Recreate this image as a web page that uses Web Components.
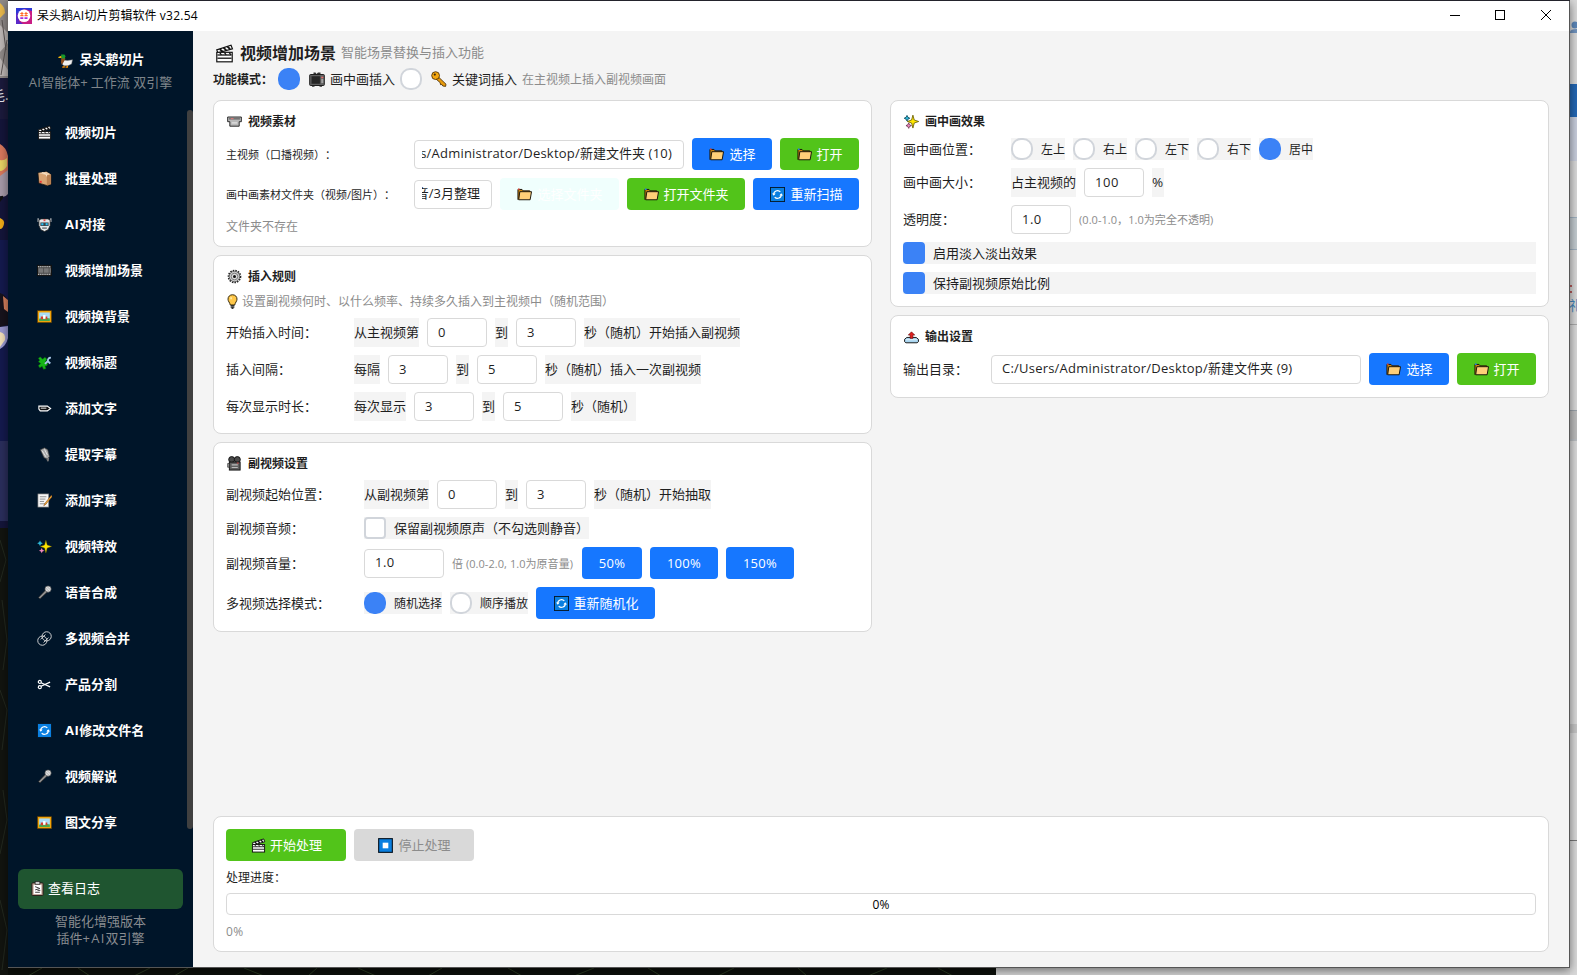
<!DOCTYPE html>
<html lang="zh-CN">
<head>
<meta charset="utf-8">
<title>呆头鹅AI切片剪辑软件 v32.54</title>
<style>
html,body{margin:0;padding:0}
body{width:1577px;height:975px;overflow:hidden;font:13px/17px "Open Sans","Noto Sans CJK SC",sans-serif;color:#1f1f1f;text-spacing-trim:space-all}
</style>
</head>
<body>
<desk-top><app-window></app-window></desk-top>
<script>
const ICONS={
clapper:'<path d="M1.5 5 13.5 1l1.2 3L2.5 7.5z" fill="#fff" stroke="#111"/><path d="M4 4.3l2.3 2M7.2 3.2l2.3 2M10.4 2.2l2.3 2" stroke="#111" stroke-width="1.5"/><rect x="1.5" y="7" width="13" height="8" fill="#fff" stroke="#111"/><path d="M2 9.3h12M2 12h12" stroke="#333" stroke-width="1.2"/><path d="M4 7.2l1.4 2M8 7.2l1.4 2M12 7.2l1.4 2" stroke="#111"/>',
box:'<path d="M1 2 10 .8l5 3V14l-4 1.6L2 13z" fill="#d9a574" stroke="#1a120c" stroke-width=".8"/><path d="M1 2 10.5 4.5 15 3.8 10 .8z" fill="#eccba6"/><path d="M10.5 4.5V15.5L15 14V3.8z" fill="#b98152"/><path d="M5.5 1.5l4.7 2.2v2" stroke="#f6e3ca" fill="none"/><path d="M3 10.5h2v2H3z" fill="#e33"/>',
robot:'<path d="M1.2 1.2v4M14.8 1.2v4" stroke="#ccc" stroke-width="1.2"/><path d="M2 3.5l2.2-1.5h7.6L14 3.500v5.500l-2 4.500-4 2-4-2L2 9z" fill="#e4e7e9" stroke="#222" stroke-width=".8"/><path d="M3.600 5.800h8.800v3.800H3.600z" fill="#3c4246"/><rect x="4.600" y="6.600" width="2.200" height="2.200" fill="#29c0f6"/><rect x="9.200" y="6.600" width="2.200" height="2.200" fill="#29c0f6"/><path d="M7 2.5h2v2H7z" fill="#e44"/><path d="M5.500 11.800h5" stroke="#333"/>',
film:'<rect x=".5" y="2.500" width="15" height="11" fill="#4a4a4a" stroke="#111"/><path d="M1 3.900h14M1 12.100h14" stroke="#ccc" stroke-width="1.2" stroke-dasharray="1 1"/><path d="M1.500 5.500h5.200v5H1.500zM7.500 5.500h5v5h-5zM13.300 5.500h1.500v5h-1.500z" fill="#777"/>',
picture:'<rect x=".5" y="1.800" width="15" height="12.700" fill="#f0a30a" stroke="#5c3a00" stroke-width=".7"/><rect x="2.300" y="3.700" width="11.400" height="9" fill="#a9dcf7"/><path d="M2.300 10.300 7 9l6.700 1v2.700H2.300z" fill="#4aa84a"/><path d="M4 8h3v3H4zM9 8h2v3H9z" fill="#d83b2e"/><path d="M6.500 6.500h2.500v4H6.500z" fill="#fff"/>',
puzzle:'<path d="M3 5.500 1.500 3.500 3.500 2 6 4.500 8.500 2.500l2 2L8.700 7.500 11.500 9l-1 2.500-2 .2 1 2.800-2.500.8L5.500 12 3 13.500 1.500 11.500 4 9 1.500 7.200z" fill="#16b516" stroke="#0d7a0d" stroke-width=".5"/><path d="M14.800 3a2.800 2.800 0 0 0-3 3.800l2.400 2.200M12 6 8.500 9.500" stroke="#a8c8e8" stroke-width="2" fill="none"/>',
pencil:'<path d="M2 5.500h9l3.500 2.500L11 10.500H3.500L2 8.500z" fill="#111" stroke="#fff" stroke-width="1.200"/><path d="M4 7.600h6" stroke="#fff" stroke-width="1"/>',
studio:'<path d="M3.500 3 8 .8l3.500 2.200 1.800 7-2 3-3.800-1.500z" fill="#a8a8a8" stroke="#333" stroke-width=".7"/><path d="M5.500 4 9.500 10.500M8 2.500l3 6" stroke="#e6e6e6"/><path d="M10 12.700l3-1.500-.5 4-1.500.2z" fill="#777"/>',
memo:'<rect x="1" y="1" width="11.5" height="14" fill="#f6f6f6" stroke="#777" stroke-width=".7"/><path d="M3 4h7M3 6.5h6M3 9h4.5M3 11.5h7" stroke="#8b8b8b"/><path d="M15.3 2.5 8.2 11.4l-1 2.2L9.4 12 16 4z" fill="#ffb93c" stroke="#8c4a14" stroke-width=".6"/>',
sparkles:'<path d="M9.5 1.2l1.400 5.200 4.800 1.600-4.800 1.600-1.400 5.400-1.400-5.400L3.500 8l4.600-1.600z" fill="#ffe600" stroke="#6b5f00" stroke-width="var(--edge,.4)"/><path d="M3.200 1.500l1 2 2 1-2 1-1 2-1-2-2-1 2-1z" fill="#2fb7d8" stroke="#0b4a5c" stroke-width="var(--edge,.1)"/><path d="M5 9.500l.9 2 2 .9-2 .9-.9 2-.9-2-2-.9 2-.9z" fill="#f28bc0" stroke="#6b3450" stroke-width="var(--edge,.1)"/>',
mic:'<path d="M9 5.5 11 7.5 3.200 14.800 1.500 13.300z" fill="#8d8d8d" stroke="#222" stroke-width=".7"/><circle cx="11.800" cy="4.300" r="3.300" fill="#ddd" stroke="#555" stroke-width=".7"/><path d="M9.500 3.500l3.500 3.200M10.800 1.800l3.300 3" stroke="#999" stroke-width=".6"/>',
link:'<g fill="none" stroke="#d8d8d8" stroke-width="1"><circle cx="5.700" cy="10.300" r="4.900"/><circle cx="10.300" cy="5.700" r="4.900"/><path d="M3.800 8.800 9 3.800M12.200 7.200 7 12.200"/></g>',
scissors:'<g fill="none" stroke="#fff" stroke-width="1.300"><circle cx="3" cy="5.200" r="1.600"/><circle cx="3" cy="10.800" r="1.600"/><path d="M4.300 6.200 14 10.500M4.300 9.800 14 5.500"/></g>',
refresh:'<rect x=".5" y=".5" width="15" height="15" fill="#0a7fe0" stroke="#061a2b"/><path d="M4 8.300A4 4 0 0 1 11 5.300M12 7.700A4 4 0 0 1 5 10.700" fill="none" stroke="#fff" stroke-width="1.300"/><path d="M2.200 7h3.800L4 9.400zM10 9h3.900L12 6.600z" fill="#fff"/>',
clip:'<rect x="2" y="2" width="12" height="13.500" rx="1" fill="#b99a8b" stroke="#241a16"/><rect x="3.800" y="4" width="8.400" height="10" fill="#fff"/><path d="M5.500 6 10.500 8 5.500 9.500M5.500 12h5M8 10l3 0" stroke="#333" fill="none"/><rect x="5.500" y=".7" width="5" height="2.800" fill="#ccc" stroke="#222" stroke-width=".7"/>',
tv:'<path d="M4.500 1.500h2l1 1.500 1.500-1.500h2.500V4h-7z" fill="#333"/><rect x=".7" y="3.500" width="14.600" height="11" rx=".8" fill="#666" stroke="#1e1e1e"/><rect x="2.200" y="5" width="9" height="8" fill="#262626" stroke="#555" stroke-width=".6"/><path d="M12.300 6.500h2" stroke="#e66" stroke-width="1.400"/><path d="M12.300 9h2M12.300 11h2" stroke="#ddd"/><path d="M3 15.200h2.500M10.500 15.200H13" stroke="#222"/>',
key:'<path d="M7.500 6 15 13.200l-.4 2.200-2.800-.4-1-1.500-1.300.2-.3-2L5 8z" fill="#e79a0c" stroke="#402600" stroke-width=".8"/><circle cx="4.600" cy="4.600" r="3.900" fill="#f5a70e" stroke="#402600" stroke-width=".8"/><circle cx="3.800" cy="3.600" r="1.100" fill="#3b2a10"/>',
vhs:'<path d="M.7 3.200h14.600v5H13V13H3V8.200H.7z" fill="#b9b9b9" stroke="#222"/><path d="M2.200 5.200h11.600" stroke="#555" stroke-width="1.200"/><path d="M5 9.500h6" stroke="#eee"/><path d="M4 5h3" stroke="#e77"/>',
folder:'<path d="M1 13.600V2.600h4.300l1.300 1.500h7v2" fill="#c98310" stroke="#141008" stroke-width="1"/><path d="M1.800 13.600 3 5h12.500l-1.500 8.600z" fill="#ffcf78" stroke="#141008"/><path d="M1 2.400h1.800" stroke="var(--tab,#d4402e)" stroke-width="1.600"/>',
gear:'<circle cx="8" cy="8" r="6.400" fill="none" stroke="#222" stroke-width="1.800" stroke-dasharray="1.600 1.150"/><circle cx="8" cy="8" r="5.600" fill="#c8c8c8" stroke="#444" stroke-width=".8"/><circle cx="8" cy="8" r="3.500" fill="#ddd" stroke="#777" stroke-width="1"/><circle cx="8" cy="8" r="1.600" fill="#111"/>',
bulb:'<path d="M8 .8c3 0 4.800 2.100 4.800 4.700 0 2.400-2 3.600-2.400 6.200H5.600C5.200 9.100 3.200 7.900 3.200 5.500 3.200 2.900 5 .8 8 .8z" fill="#ffc84a" stroke="#2c2004"/><path d="M6 12.500h4M6 14h4M7 15.400h2" stroke="#333" stroke-width="1.300"/><path d="M6.500 3.500v2" stroke="#fff3c0" stroke-width="1.400"/>',
camera:'<circle cx="5" cy="3.800" r="3.200" fill="#4a4a4a" stroke="#111"/><circle cx="11" cy="3.800" r="3.200" fill="#4a4a4a" stroke="#111"/><rect x="2.500" y="6.500" width="11.500" height="8.500" fill="#606060" stroke="#111"/><path d="M.7 8h2v4h-2z" fill="#999" stroke="#111" stroke-width=".6"/><path d="M5 9.500h6.500M5 12.300h6.500" stroke="#bbb" stroke-width="1.200"/><path d="M10.500 7.500h2" stroke="#d44"/>',
outbox:'<path d="M3 9h10l2.400 2v2.500l-1.400 1.200H2L.6 13.500V11z" fill="#a7d4ef" stroke="#111"/><path d="M2 11.500h12" stroke="#e8f6ff"/><path d="M8 3 11.500 6.500H9.500v3.500H6.500V6.500H4.500z" fill="#e02020" stroke="#5b0909" stroke-width=".6"/>',
stop:'<rect x=".7" y=".7" width="14.600" height="14.600" fill="#0a7fe0" stroke="#07131f" stroke-width="1.200"/><rect x="5" y="5" width="6" height="6" fill="#fff"/>',
duck:'<path d="M6 7.500 10 8l5.500-.8-1 4.500-4 2H6.500L4.500 12z" fill="#efefef" stroke="#666" stroke-width=".5"/><path d="M3.500 4.500 7 3l.8 3.500L6 9.500l-2 3L3.200 10z" fill="#8a4a1c"/><path d="M3.300 1.500h3.500l1.300 2-1 2.300H3.800z" fill="#169a2c"/><path d="M.3 4.200 3.500 3v2.200H.5z" fill="#f5b60a"/><path d="M6.500 13.500V15H4.500M10 13.500V15H8" stroke="#f08a00" stroke-width="1.400" fill="none"/>',
logo:'<rect width="16" height="16" fill="#c81d84"/><path d="M0 0h8v3L3 8v5l4 3H0z" fill="#5a28c8"/><path d="M0 0h16v3L8 1 0 6z" fill="#2d37d6"/><circle cx="8" cy="7.800" r="6.300" fill="#fff"/><path d="M4.300 5.500h3.200M8.500 5.500h3.200M4.300 7.600h3.200M8.500 7.600h3.200M6 4v4M10 4v4" stroke="#ff6a28" stroke-width="1.100"/><path d="M4.300 10.200h3M8.500 10.200h3" stroke="#a02ce0" stroke-width="1.700"/>'
};
const define=(name,html,after)=>{
  const t=document.createElement('template');t.innerHTML=html;
  customElements.define(name,class extends HTMLElement{
    constructor(){super();this.attachShadow({mode:'open'}).append(t.content.cloneNode(true));}
    connectedCallback(){if(after)after(this,this.shadowRoot);}
  });
};

define('app-icon',`<style>:host{display:block;width:15px;height:15px;flex:none}svg{display:block;width:100%;height:100%}</style><svg viewBox="0 0 16 16"></svg>`,
 (h,r)=>{r.querySelector('svg').innerHTML=ICONS[h.getAttribute('name')]||'';});

/* Latin run with slightly wider tracking */
define('l-run',`<style>:host{display:inline;letter-spacing:var(--track,.22px)}</style><slot></slot>`);

define('ui-text',`<style>:host{display:flex;align-items:center;white-space:nowrap;flex:none}
 :host([tag]){background:#f4f4f4;height:29px}
 :host([label]){width:var(--label,120px)}
 :host([s11]){font-size:11px}:host([s12]){font-size:12px}:host([b]){font-weight:700}
 :host([mute]){color:#8c8c8c}</style><span><slot></slot></span>`);

define('ui-input',`<style>:host{display:flex;box-sizing:border-box;height:29px;border:1px solid #d9d9d9;border-radius:4px;background:#fff;padding:0 10px 2px;align-items:center;flex:none;overflow:hidden;white-space:nowrap}
 :host([end]){padding:0 11px 2px 7px}
 :host([num]){letter-spacing:.5px}
 div{flex:1;overflow:hidden;display:flex;line-height:20px}:host([end]) div{justify-content:flex-end}</style><div><span><slot></slot></span></div>`);

define('ui-button',`<style>:host{display:flex;height:32px;border-radius:4px;background:#1677ff;color:#fff;align-items:center;justify-content:center;gap:6px;white-space:nowrap;flex:none}
 :host([kind=green]){background:#52c41a;gap:5px}:host([kind=ghost]){background:#f0fffd}:host([kind=off]){background:#d9d9d9;color:#8c8c8c}
 :host([num]){letter-spacing:.3px}
 div{margin:0 -1px 0 1px}</style><div hidden></div><span><slot></slot></span>`,
 (h,r)=>{const n=h.getAttribute('icon'),d=r.querySelector('div');if(!d)return;if(n){d.hidden=false;d.innerHTML='<app-icon name="'+n+'"></app-icon>';}else d.remove();});

define('ui-choice',`<style>:host{display:flex;align-items:center;height:22px;gap:8px;background:#f4f4f4;white-space:nowrap;flex:none}
 i{box-sizing:border-box;width:22px;height:22px;border:2px solid #d1d5db;background:#fff;border-radius:10px;flex:none}
 :host([box]) i{border-radius:4px}:host([on]) i{background:#3b82f6;border-color:#3b82f6}
 :host([s12]){font-size:12px}
 app-icon{width:16px;height:16px;margin:0 -3px 0 1px}</style><i></i><div></div><span><slot></slot></span>`,
 (h,r)=>{const d=r.querySelector('div');if(!d)return;const n=h.getAttribute('icon');if(n)d.innerHTML='<app-icon name="'+n+'"></app-icon>';else d.remove();});

define('ui-row',`<style>:host{display:flex;align-items:center;gap:8px;height:29px}:host([h32]){height:32px}:host([h22]){height:22px}:host([h17]){height:17px}:host([h16]){height:16px}</style><slot></slot>`);

define('ui-card',`<style>:host{box-sizing:border-box;display:flex;flex-direction:column;gap:8px;padding:12px;border:1px solid #d9d9d9;border-radius:8px;background:#fff}
 header{display:flex;align-items:center;gap:6px;height:17px;font-weight:700;font-size:12px;padding-left:1px;--edge:.9}</style><header></header><slot></slot>`,
 (h,r)=>{const e=r.querySelector('header');if(!e)return;if(h.getAttribute('icon'))e.innerHTML='<app-icon name="'+h.getAttribute('icon')+'"></app-icon><span></span>',e.lastChild.textContent=h.getAttribute('heading');else e.remove();});

define('nav-item',`<style>:host{display:flex;align-items:center;height:46px;padding-left:29px;gap:13px;color:#fff;font-weight:700;white-space:nowrap}</style><div></div><span><slot></slot></span>`,
 (h,r)=>{r.querySelector('div').innerHTML='<app-icon name="'+h.getAttribute('icon')+'"></app-icon>';});

define('side-bar',`<style>:host{display:flex;flex-direction:column;width:185px;background:#001529;color:#8a8a8a}
 .brand{display:flex;justify-content:center;align-items:center;gap:6px;height:18px;margin-top:20px;color:#fff;font-weight:700;white-space:nowrap;padding-left:2px}
 .brand span{margin-top:-1px}
 .sub{height:20px;line-height:20px;margin-top:3px;text-align:center;white-space:nowrap;color:#7f858b;--track:1.300px}
 .list{display:flex;margin-top:18px;height:720px;overflow:hidden}
 nav{flex:1;margin-top:-1px;--track:.5px}.bar{width:6px;height:719px;border-radius:3px;background:#404040}
 .log{display:flex;align-items:center;gap:3px;box-sizing:border-box;margin:39px 10px 0;height:40px;border-radius:6px;background:#1f5530;color:#fff;padding:0 0 2px 12px}
 .foot{margin-top:4px;text-align:center;line-height:17px;color:#898c90;--track:1.300px}
 </style>
 <div class="brand"><app-icon name="duck"></app-icon><span>呆头鹅切片</span></div>
 <div class="sub"><l-run style="--track:.3px">AI</l-run>智能体<l-run style="--track:3px">+</l-run>工作流 双引擎</div>
 <div class="list"><nav></nav><div class="bar"></div></div>
 <div class="log"><app-icon name="clip"></app-icon><span>查看日志</span></div>
 <div class="foot">智能化增强版本<br>插件<l-run>+AI</l-run>双引擎</div>`,
 (h,r)=>{r.querySelector('nav').innerHTML=[['clapper','视频切片'],['box','批量处理'],['robot','<l-run>AI</l-run>对接'],['film','视频增加场景'],['picture','视频换背景'],['puzzle','视频标题'],['pencil','添加文字'],['studio','提取字幕'],['memo','添加字幕'],['sparkles','视频特效'],['mic','语音合成'],['link','多视频合并'],['scissors','产品分割'],['refresh','<l-run>AI</l-run>修改文件名'],['mic','视频解说'],['picture','图文分享']].map(a=>`<nav-item icon="${a[0]}">${a[1]}</nav-item>`).join('');});

define('title-bar',`<style>:host{display:flex;align-items:center;height:30px;background:#fff;color:#000;font-size:12px;padding-left:8px;--track:.25px}
 app-icon{width:16px;height:16px;margin-top:-1px}span{margin:-2px 0 0 5px;flex:1;white-space:nowrap}
 svg{display:block;margin:-2px 17px 0 0}</style>
 <app-icon name="logo"></app-icon><span>呆头鹅<l-run>AI</l-run>切片剪辑软件<l-run> v32.54</l-run></span>
 <svg width="102" height="12" fill="none" stroke="#000" shape-rendering="crispEdges"><path d="M0 6.500h10"/><rect x="45.500" y="1.500" width="9" height="9"/><path d="M91 1l10 10M101 1 91 11" shape-rendering="auto"/></svg>`);

define('main-panel',`<style>:host{display:flex;flex-direction:column;flex:1;background:#f4f4f4;padding:11px 20px 15px;box-sizing:border-box}
 .head{display:flex;align-items:center;height:22px;white-space:nowrap}
 .head app-icon{width:19px;height:19px;margin:0 6px 0 2px}
 h1{margin:-1px 0 0;font-size:16px;font-weight:700;line-height:22px}
 .head ui-text{margin:-1px 0 0 5px}
 .mode{display:flex;align-items:center;height:22px;margin-top:4px}
 .mode ui-choice{margin-right:5px}.mode ui-text[b]{width:65px}
 .cols{display:grid;grid-template-columns:659px 659px;gap:18px;margin-top:10px;align-items:start}
 .col{display:flex;flex-direction:column;gap:8px}
 .c1{--label:180px}.c2{--label:120px}.c3{--label:130px}.c4{--label:100px}.c5{--label:80px}
 .bottom{margin-top:auto}
 .prog{box-sizing:border-box;height:22px;border:1px solid #d9d9d9;border-radius:4px;display:flex;align-items:center;justify-content:center;color:#000;font-size:12px}
 </style>
 <div class="head"><app-icon name="clapper"></app-icon><h1>视频增加场景</h1><ui-text mute>智能场景替换与插入功能</ui-text></div>
 <div class="mode"><ui-text b s12>功能模式：</ui-text><ui-choice on icon="tv">画中画插入</ui-choice><ui-choice icon="key">关键词插入</ui-choice><ui-text s12 mute>在主视频上插入副视频画面</ui-text></div>
 <div class="cols"><div class="col">
  <ui-card class="c1" icon="vhs" heading="视频素材">
   <ui-row h32><ui-text label s11>主视频（口播视频）：</ui-text><ui-input end style="width:270px"><l-run>s/Administrator/Desktop/</l-run>新建文件夹<l-run> (10)</l-run></ui-input><ui-button icon="folder" style="width:80px">选择</ui-button><ui-button kind="green" icon="folder" style="width:79px;--tab:#2a7de1">打开</ui-button></ui-row>
   <ui-row h32><ui-text label s11>画中画素材文件夹（视频/图片）：</ui-text><ui-input end style="width:78px">音/3月整理</ui-input><ui-button kind="ghost" icon="folder" style="width:119px">选择文件夹</ui-button><ui-button kind="green" icon="folder" style="width:118px;--tab:#2a7de1">打开文件夹</ui-button><ui-button icon="refresh" style="width:106px">重新扫描</ui-button></ui-row>
   <ui-row h16><ui-text s12 mute>文件夹不存在</ui-text></ui-row>
  </ui-card>
  <ui-card class="c2" icon="gear" heading="插入规则">
   <ui-row h17 style="gap:4px"><app-icon name="bulb" style="margin-right:-2px;margin-left:-1px"></app-icon><ui-text s12 mute>设置副视频何时、以什么频率、持续多久插入到主视频中（随机范围）</ui-text></ui-row>
   <ui-row><ui-text label>开始插入时间：</ui-text><ui-text tag>从主视频第</ui-text><ui-input num style="width:60px">0</ui-input><ui-text tag>到</ui-text><ui-input num style="width:60px">3</ui-input><ui-text tag>秒（随机）开始插入副视频</ui-text></ui-row>
   <ui-row><ui-text label>插入间隔：</ui-text><ui-text tag>每隔</ui-text><ui-input num style="width:60px">3</ui-input><ui-text tag>到</ui-text><ui-input num style="width:60px">5</ui-input><ui-text tag>秒（随机）插入一次副视频</ui-text></ui-row>
   <ui-row><ui-text label>每次显示时长：</ui-text><ui-text tag>每次显示</ui-text><ui-input num style="width:60px">3</ui-input><ui-text tag>到</ui-text><ui-input num style="width:60px">5</ui-input><ui-text tag>秒（随机）</ui-text></ui-row>
  </ui-card>
  <ui-card class="c3" icon="camera" heading="副视频设置">
   <ui-row><ui-text label>副视频起始位置：</ui-text><ui-text tag>从副视频第</ui-text><ui-input num style="width:60px">0</ui-input><ui-text tag>到</ui-text><ui-input num style="width:60px">3</ui-input><ui-text tag>秒（随机）开始抽取</ui-text></ui-row>
   <ui-row h22><ui-text label>副视频音频：</ui-text><ui-choice box>保留副视频原声（不勾选则静音）</ui-choice></ui-row>
   <ui-row h32><ui-text label>副视频音量：</ui-text><ui-input num style="width:80px">1.0</ui-input><ui-text s11 mute style="width:122px;letter-spacing:.05px">倍 (0.0-2.0, 1.0为原音量)</ui-text><ui-button num style="width:60px">50%</ui-button><ui-button num style="width:68px">100%</ui-button><ui-button num style="width:68px">150%</ui-button></ui-row>
   <ui-row h32><ui-text label>多视频选择模式：</ui-text><ui-choice on s12>随机选择</ui-choice><ui-choice s12>顺序播放</ui-choice><ui-button icon="refresh" style="width:119px">重新随机化</ui-button></ui-row>
  </ui-card>
 </div><div class="col">
  <ui-card class="c4" icon="sparkles" heading="画中画效果">
   <ui-row h22><ui-text label>画中画位置：</ui-text><ui-choice s12>左上</ui-choice><ui-choice s12>右上</ui-choice><ui-choice s12>左下</ui-choice><ui-choice s12>右下</ui-choice><ui-choice on s12>居中</ui-choice></ui-row>
   <ui-row><ui-text label>画中画大小：</ui-text><ui-text tag>占主视频的</ui-text><ui-input num style="width:60px">100</ui-input><ui-text tag style="width:12px;font-size:13.500px">%</ui-text></ui-row>
   <ui-row><ui-text label>透明度：</ui-text><ui-input num style="width:60px">1.0</ui-input><ui-text s11 mute style="letter-spacing:.05px">(0.0-1.0，1.0为完全不透明)</ui-text></ui-row>
   <ui-choice box on>启用淡入淡出效果</ui-choice>
   <ui-choice box on>保持副视频原始比例</ui-choice>
  </ui-card>
  <ui-card class="c5" icon="outbox" heading="输出设置">
   <ui-row h32><ui-text label>输出目录：</ui-text><ui-input style="width:370px"><l-run>C:/Users/Administrator/Desktop/</l-run>新建文件夹<l-run> (9)</l-run></ui-input><ui-button icon="folder" style="width:80px">选择</ui-button><ui-button kind="green" icon="folder" style="width:79px;--tab:#2a7de1">打开</ui-button></ui-row>
  </ui-card>
 </div></div>
 <ui-card class="bottom">
  <ui-row h32><ui-button kind="green" icon="clapper" style="width:120px">开始处理</ui-button><ui-button kind="off" icon="stop" style="width:120px">停止处理</ui-button></ui-row>
  <ui-row h16><ui-text s12>处理进度：</ui-text></ui-row>
  <div class="prog">0%</div>
  <ui-row h16><ui-text s12 mute style="letter-spacing:.4px">0%</ui-text></ui-row>
 </ui-card>`);

define('app-window',`<style>:host{display:flex;flex-direction:column;width:1561px;height:966px;border-right:1px solid #555;border-bottom:1px solid #555;box-shadow:0 2px 9px rgba(0,0,0,.5);position:relative}
 .body{display:flex;flex:1;min-height:0}</style>
 <title-bar></title-bar><div class="body"><side-bar></side-bar><main-panel></main-panel></div>`);

define('desk-top',`<style>:host{display:grid;grid-template-columns:8px 1562px 7px;grid-template-rows:967px 8px;width:1577px;height:975px;padding-top:1px;box-sizing:border-box;background:#2a2a34;overflow:hidden}
 svg{display:block}.l,.r{margin-top:-1px}slot{grid-area:1/2}.l{grid-area:1/1/3/2}.r{grid-area:1/3/3/4}.b{grid-area:2/2/3/3}
 text{font:13px "Noto Sans CJK SC",sans-serif}</style>
 <svg class="l" width="8" height="975"><rect width="8" height="975" fill="#14153a"/>
  <rect width="8" height="78" fill="#8f8987"/><path d="M0 3q5 4 5 10l-5 5z" fill="#e9b94c"/><path d="M0 25l8 8v10L0 52zM0 58l8 12v6H0z" fill="#bdb6b4"/><path d="M2 20l4 30M7 40 1 75" stroke="#5b5453"/>
  <rect y="78" width="8" height="41" fill="#1b1a3c"/><text x="-8" y="100" fill="#e8e8ee">毛.</text>
  <path d="M0 144q6 3 8 12v20H0z" fill="#d8785c"/><path d="M0 160q4 1 7-2v8q-3 5-7 5z" fill="#e8d263"/><path d="M0 176l8-6v24q-3 4-8 2z" fill="#a79aa8"/><path d="M0 197q4-3 3 1l-3 4z" fill="#111"/><path d="M0 218q5 2 4 6-1 5-4 5z" fill="#f0ab18"/>
  <rect y="240" width="8" height="201" fill="#141a4e"/><path d="M0 293q6 2 8 8v24l-8 2z" fill="#17131c"/><path d="M3 296l5 4v12l-4-3z" fill="#d9825f"/><path d="M0 327l8-1v12q-2 8-8 11z" fill="#9a98cf"/><path d="M0 332q6 1 5 8l-5 7z" fill="#f2dfb8"/>
  <rect y="441" width="8" height="80" fill="#2a2e5c"/><rect y="528" width="8" height="447" fill="#12140f"/><path d="M0 540l6 20-6 22M2 600l5 40-4 30M0 690l7 20-5 40M3 790l4 30-7 34M0 900l7 30-5 40" stroke="#23291f" fill="none"/></svg>
 <slot></slot>
 <svg class="b" width="1562" height="8"><rect width="1562" height="8" fill="#0c0f0a"/><path d="M20 8 34 0M70 0l12 8M126 8l16-8M180 0l-14 8M236 0l20 8M300 8l9-8M350 0l18 8M420 8l14-8M500 0l14 8M566 8l20-8M640 0l13 8M710 8l16-8M790 0l9 8M860 8l19-8M930 0l15 8" stroke="#2a3a20"/><rect x="988" width="574" height="8" fill="#d2d2d2"/></svg>
 <svg class="r" width="7" height="975"><rect width="7" height="975" fill="#d9d9d9"/><circle cx="5" cy="25" r="3.500" fill="#5c86b8"/><path d="M0 33v-1q0-3 7-3v4z" fill="#6f92bd"/><rect y="84" width="7" height="33" fill="#2467b3"/><rect y="117" width="7" height="44" fill="#c7cddb"/><rect y="217" width="7" height="33" fill="#c3cbd0"/><path d="M0 217.500h7M0 249.500h7" stroke="#9fb0bf"/><path d="M1 285v2M1 291v2" stroke="#a33" stroke-width="1.500"/><text x="-1" y="310" fill="#4285ba">礼</text><path d="M0 324.500h7" stroke="#aaa"/><path d="M0 410.500h7M0 440h7" stroke="#9ba3aa"/><rect y="411" width="7" height="28" fill="#bdbdbd"/><rect y="724" width="7" height="9" fill="#c4c4c4"/><path d="M0 840.500h7" stroke="#777"/></svg>`);
</script>
</body>
</html>
